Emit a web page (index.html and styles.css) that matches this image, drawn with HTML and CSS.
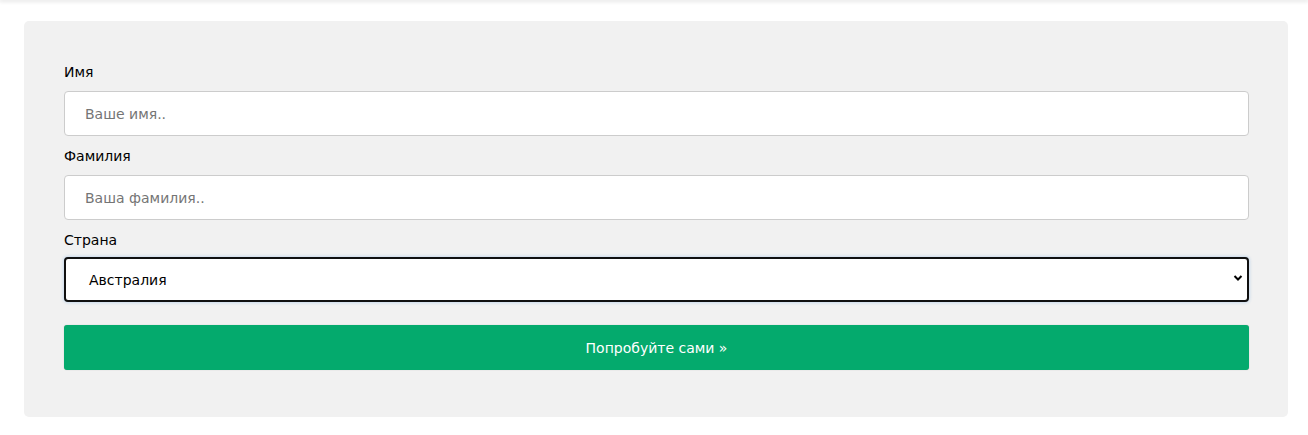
FILE: index.html
```html
<!DOCTYPE html>
<html lang="ru">
<head>
<meta charset="utf-8">
<link rel="stylesheet" href="styles.css">
</head>
<body>
<div class="topbar"></div>
<div class="panel">
  <form class="form">
    <label class="lbl" for="fname">Имя</label>
    <input class="field" id="fname" type="text" placeholder="Ваше имя..">
    <label class="lbl" for="lname">Фамилия</label>
    <input class="field" id="lname" type="text" placeholder="Ваша фамилия..">
    <label class="lbl" for="country">Страна</label>
    <div class="selwrap">
      <div class="field select">Австралия</div>
      <svg class="chev" width="10" height="8" viewBox="0 0 10 8"><path d="M1.5 2 L5 5.5 L8.5 2" fill="none" stroke="#000" stroke-width="2"/></svg>
    </div>
    <button class="btn" type="button">Попробуйте сами »</button>
  </form>
</div>
</body>
</html>
```
FILE: styles.css
```css
html, body { margin: 0; padding: 0; background: #fff; }
body { font-family: "DejaVu Sans", Verdana, sans-serif; font-size: 14px; color: #000; }
.topbar { height: 0; box-shadow: 0 0 4px 1px rgba(0,0,0,0.18); }
.panel {
  margin: 21px 20px 0 24px;
  background: #f1f1f1;
  border-radius: 5px;
  padding: 39px 39px 40px 40px;
  height: 396px;
  box-sizing: border-box;
}
.form { display: flex; flex-direction: column; }
.lbl { display: block; line-height: 22px; height: 22px; margin-top: 1px; }
.field {
  box-sizing: border-box;
  width: 100%;
  height: 45px;
  margin: 8px 0;
  padding: 12px 20px;
  border: 1px solid #ccc;
  border-radius: 4px;
  background: #fff;
  font-family: inherit;
  font-size: 14px;
  color: #000;
  outline: none;
}
.field::placeholder { color: #757575; }
.selwrap { position: relative; margin-top: -2px; }
.select {
  border: 2px solid #101010;
  box-shadow: 0 0 3px 1px rgba(150,190,230,0.45);
  padding: 12px 23px;
  line-height: 18px;
}
.chev { position: absolute; right: 6px; top: 25px; }
.btn {
  margin-top: 15px;
  height: 45px;
  width: 100%;
  border: none;
  border-radius: 3px;
  background: #04AA6D;
  color: #fff;
  font-family: inherit;
  font-size: 14px;
  box-shadow: 0 0 1px rgba(0,0,0,0.3);
}
```
